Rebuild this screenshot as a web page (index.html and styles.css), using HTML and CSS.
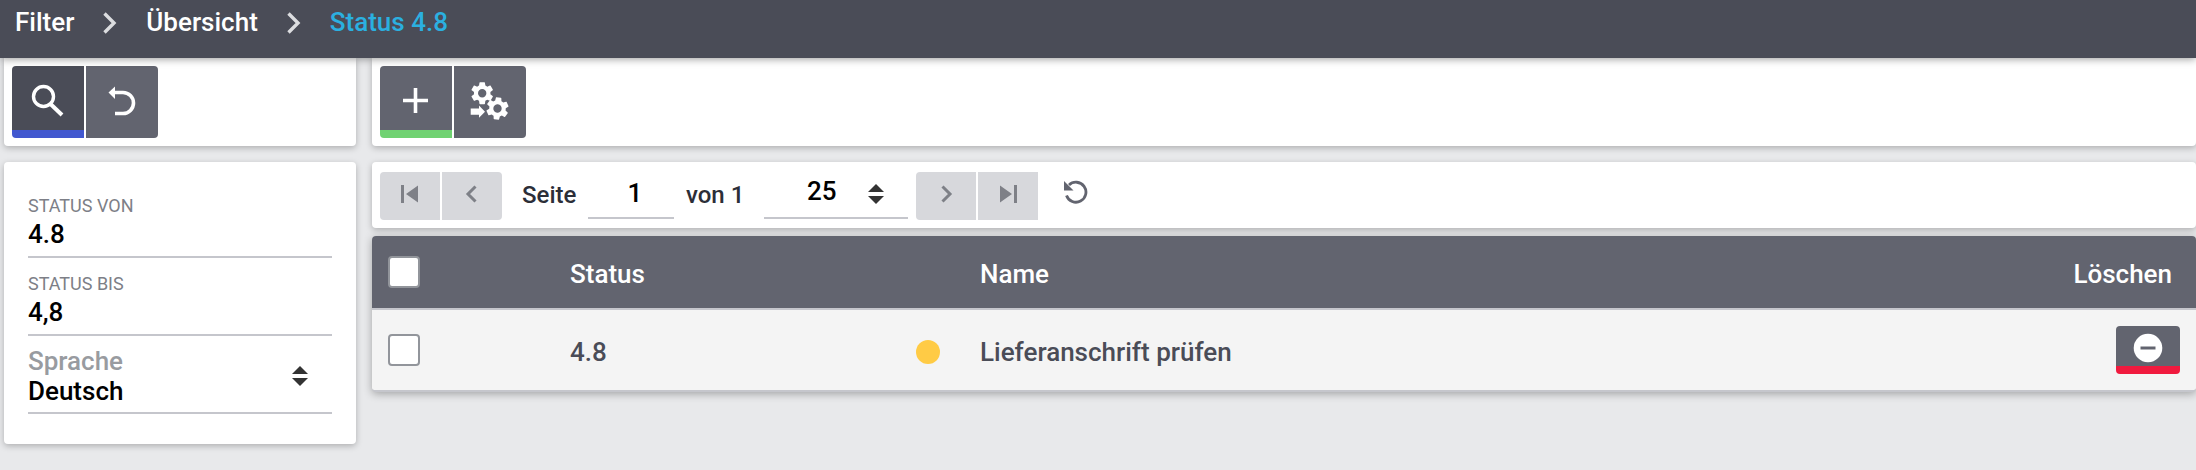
FILE: index.html
```html
<!DOCTYPE html>
<html lang="de">
<head>
<meta charset="utf-8">
<meta name="viewport" content="width=device-width, initial-scale=1">
<title>Status 4.8</title>
<link rel="stylesheet" href="styles.css">
</head>
<body>
<header class="topbar">
  <nav class="crumbs" aria-label="Navigation">
    <a class="crumb" href="#">Filter</a>
    <svg class="crumb-sep" viewBox="0 0 16 24" aria-hidden="true"><path d="M2.500 2.500 12 12l-9.500 9.500"/></svg>
    <a class="crumb" href="#">Übersicht</a>
    <svg class="crumb-sep" viewBox="0 0 16 24" aria-hidden="true"><path d="M2.500 2.500 12 12l-9.500 9.500"/></svg>
    <a class="crumb crumb-current" href="#" aria-current="page">Status 4.8</a>
  </nav>
</header>
<div class="layout">
  <aside class="sidebar">
    <div class="card toolbar">
      <button class="tool tool-active" type="button" aria-label="Suchen">
        <svg class="icon" viewBox="0 0 40 40" aria-hidden="true"><circle cx="15.500" cy="14.500" r="10" fill="none" stroke="#fff" stroke-width="3.400"/><path d="M22.500 22 34 33" fill="none" stroke="#fff" stroke-width="4"/></svg>
      </button>
      <button class="tool" type="button" aria-label="Zurücksetzen">
        <svg class="icon" viewBox="0 0 40 40" aria-hidden="true"><path d="M11 10.500h10a10.500 10.500 0 0 1 0 21H13" fill="none" stroke="#fff" stroke-width="3.600"/><path d="M6.500 10.500 13 4.500v12.500z" fill="#fff"/></svg>
      </button>
    </div>
    <form class="card filter">
      <div class="field">
        <label class="field-label" for="von">STATUS VON</label>
        <input class="field-input" id="von" type="text" value="4.8">
      </div>
      <div class="field">
        <label class="field-label" for="bis">STATUS BIS</label>
        <input class="field-input" id="bis" type="text" value="4,8">
      </div>
      <div class="field field-select">
        <label class="field-label field-label-large" for="sprache">Sprache</label>
        <select class="field-input" id="sprache"><option>Deutsch</option></select>
        <svg class="sort" viewBox="0 0 16 20" aria-hidden="true"><path d="M0 8 8 0l8 8zM0 12h16l-8 8z"/></svg>
      </div>
    </form>
  </aside>
  <main class="content">
    <div class="card toolbar">
      <button class="tool tool-add" type="button" aria-label="Hinzufügen">
        <svg class="icon" viewBox="0 0 40 40" aria-hidden="true"><path d="M19.500 6v25M7 18.500h25" fill="none" stroke="#fff" stroke-width="3.600"/></svg>
      </button>
      <button class="tool" type="button" aria-label="Verarbeiten">
        <svg class="icon" viewBox="0 0 40 40" aria-hidden="true">
          <defs><path id="gear" d="M19.430 12.980c.04-.32.07-.64.07-.98s-.03-.66-.07-.98l2.110-1.650c.19-.15.24-.42.12-.64l-2-3.460c-.12-.22-.39-.3-.61-.22l-2.490 1c-.52-.4-1.080-.73-1.690-.98l-.38-2.650C14.460 2.180 14.250 2 14 2h-4c-.25 0-.46.18-.49.42l-.38 2.650c-.61.25-1.170.59-1.690.98l-2.490-1c-.23-.09-.49 0-.61.22l-2 3.460c-.13.22-.07.49.12.64l2.110 1.650c-.04.32-.07.65-.07.98s.03.66.07.98l-2.110 1.650c-.19.15-.24.42-.12.64l2 3.460c.12.22.39.3.61.22l2.490-1c.52.4 1.080.73 1.690.98l.38 2.650c.03.24.24.42.49.42h4c.25 0 .46-.18.49-.42l.38-2.650c.61-.25 1.170-.59 1.690-.98l2.490 1c.23.09.49 0 .61-.22l2-3.460c.12-.22.07-.49-.12-.64l-2.110-1.650zM12 15.800a3.800 3.800 0 1 1 0-7.600 3.800 3.800 0 0 1 0 7.600z"/></defs>
          <g fill="#fff"><use href="#gear" transform="translate(-1 -2) scale(1.100)"/><use href="#gear" transform="translate(27.500 26.500) rotate(6) scale(1.100) translate(-12 -12)"/><path d="M.7 26.500H9v-3l6 6.200-6 6v-3H.7z"/></g>
        </svg>
      </button>
    </div>
    <div class="card pager">
      <div class="pager-group">
        <button class="page-btn" type="button" disabled aria-label="Erste Seite"><svg class="page-icon" viewBox="0 0 24 24" aria-hidden="true"><path d="M3 3h3v18H3zM20 3.500v17L8 12z"/></svg></button>
        <button class="page-btn" type="button" disabled aria-label="Vorherige Seite"><svg class="page-icon" viewBox="0 0 24 24" aria-hidden="true"><path class="chevron" d="M15.500 4.500 8 12l7.500 7.500"/></svg></button>
      </div>
      <label class="pager-text" for="seite">Seite</label>
      <input class="page-input" id="seite" type="text" value="1">
      <span class="pager-text pager-total">von 1</span>
      <div class="page-size">
        <select class="page-size-select" aria-label="Einträge pro Seite"><option>25</option></select>
        <svg class="sort" viewBox="0 0 16 20" aria-hidden="true"><path d="M0 8 8 0l8 8zM0 12h16l-8 8z"/></svg>
      </div>
      <div class="pager-group pager-group-next">
        <button class="page-btn" type="button" disabled aria-label="Nächste Seite"><svg class="page-icon" viewBox="0 0 24 24" aria-hidden="true"><path class="chevron" d="M8.500 4.500 16 12l-7.500 7.500"/></svg></button>
        <button class="page-btn" type="button" disabled aria-label="Letzte Seite"><svg class="page-icon" viewBox="0 0 24 24" aria-hidden="true"><path d="M18 3h3v18h-3zM4 3.500v17L16 12z"/></svg></button>
      </div>
      <button class="reload" type="button" aria-label="Neu laden"><svg class="reload-icon" viewBox="0 0 24 24" aria-hidden="true"><path d="M2.500 15.500A10 10 0 1 0 5 5" fill="none" stroke="#62646f" stroke-width="2.800"/><path d="M0 1v9.500h9.500z" fill="#62646f"/></svg></button>
    </div>
    <table class="grid">
      <thead>
        <tr>
          <th class="col-check"><input class="check" type="checkbox" aria-label="Alle auswählen"></th>
          <th class="col-status">Status</th>
          <th class="col-dot"></th>
          <th class="col-name">Name</th>
          <th class="col-delete">Löschen</th>
        </tr>
      </thead>
      <tbody>
        <tr>
          <td class="col-check"><input class="check" type="checkbox" aria-label="4.8 auswählen"></td>
          <td class="col-status">4.8</td>
          <td class="col-dot"><span class="dot"></span></td>
          <td class="col-name">Lieferanschrift prüfen</td>
          <td class="col-delete"><button class="delete" type="button" aria-label="Löschen"><svg class="delete-icon" viewBox="0 0 30 30" aria-hidden="true"><circle cx="15" cy="15" r="14.300" fill="#fff"/><path d="M7.500 15h15" stroke="#62646f" stroke-width="3"/></svg></button></td>
        </tr>
      </tbody>
    </table>
  </main>
</div>
</body>
</html>
```
FILE: styles.css
```css
* { box-sizing: border-box; }

body {
  margin: 0;
  min-height: 100vh;
  background: #e8e9eb;
  color: #4a4c57;
  font: 500 26px/30px Roboto, "Liberation Sans", sans-serif;
}

button, input, select {
  margin: 0;
  padding: 0;
  border: 0;
  border-radius: 0;
  background: none;
  color: #000;
  font: inherit;
}

svg { display: block; }

.topbar {
  position: relative;
  z-index: 1;
  height: 58px;
  padding: 7px 15px;
  background: #4a4c57;
  box-shadow: 0 1px 8px rgba(0, 0, 0, 0.4);
}
.crumbs { display: flex; align-items: center; }
.crumb { color: #fff; text-decoration: none; }
.crumb-current { color: #2bb0e0; }
.crumb-sep {
  width: 16px;
  height: 24px;
  margin: 1px 28px 0;
  fill: none;
  stroke: #dcdde0;
  stroke-width: 3.400;
}

.layout { display: flex; gap: 16px; padding-left: 4px; }
.sidebar { flex: none; width: 352px; }
.content { flex: 1; min-width: 0; }

.card {
  background: #fff;
  border-radius: 4px;
  box-shadow: 0 2px 6px rgba(0, 0, 0, 0.25);
}

.toolbar { display: flex; gap: 2px; margin-bottom: 16px; padding: 8px; border-radius: 0 0 4px 4px; }
.tool {
  display: grid;
  place-items: center;
  width: 72px;
  height: 72px;
  padding-top: 8px;
  border-bottom: 8px solid transparent;
  background: #62646f;
}
.tool:first-child { border-radius: 4px 0 0 4px; }
.tool:last-child { border-radius: 0 4px 4px 0; }
.tool-active { background: #4a4c57; border-bottom-color: #4258cf; }
.tool-add { border-bottom-color: #70d272; }
.icon { width: 40px; height: 40px; }

.filter { padding: 30px 24px; }
.field { display: flex; flex-direction: column; height: 78px; border-bottom: 2px solid #c5c6cc; }
.field:first-child { height: 66px; }
.field-label { padding-top: 14px; color: #7d7f87; font-size: 18px; font-weight: 400; line-height: 24px; }
.field:first-child .field-label { padding-top: 2px; }
.field-input { width: 100%; height: 32px; appearance: none; }
.field-label-large { padding-top: 11px; color: #989ba0; font-size: 26px; font-weight: 500; line-height: 28px; }
.field-select { position: relative; }
.sort { position: absolute; width: 16px; height: 20px; fill: #333; pointer-events: none; }
.field-select .sort { right: 24px; top: 30px; }

.pager { display: flex; align-items: center; height: 66px; margin-bottom: 8px; padding: 2px 8px 0; color: #2c2e38; font-size: 24px; }
.pager-group { display: flex; gap: 2px; }
.page-btn { display: grid; place-items: center; width: 60px; height: 48px; padding-bottom: 4px; background: #d7d8dc; }
.page-btn:first-child { border-radius: 4px 0 0 4px; }
.page-btn:last-child { border-radius: 0 4px 4px 0; }
.pager-group-next .page-btn:last-child { border-radius: 0; }
.page-icon { width: 24px; height: 24px; fill: #7e8087; }
.chevron { fill: none; stroke: #7e8087; stroke-width: 3; }
.pager-text { width: 66px; margin-left: 20px; padding-bottom: 2px; }
.page-input { width: 86px; height: 46px; padding: 0 0 4px 8px; border-bottom: 2px solid #c5c6cc; font-size: 26px; text-align: center; }
.pager-total { width: 78px; margin-left: 12px; }
.page-size { position: relative; width: 144px; }
.page-size-select { width: 100%; height: 46px; padding: 0 0 8px 43px; border-bottom: 2px solid #c5c6cc; appearance: none; font-size: 26px; }
.page-size .sort { right: 24px; top: 11px; }
.pager-group-next { margin-left: 8px; }
.reload { margin: 0 0 8px 26px; }
.reload-icon { width: 24px; height: 24px; }

.grid {
  width: 100%;
  border-collapse: separate;
  border-spacing: 0;
  table-layout: fixed;
  background: #f4f4f4;
  border-bottom: 2px solid #c5c6cc;
  border-radius: 4px;
  box-shadow: 0 2px 8px rgba(0, 0, 0, 0.3);
}
.grid th, .grid td { padding: 0; font-weight: 500; text-align: left; vertical-align: middle; }
.grid th { height: 74px; background: #62646f; border-bottom: 2px solid #c5c6cc; color: #fff; }
.grid td { height: 80px; }
.grid th:first-child { border-top-left-radius: 4px; }
.grid th:last-child { border-top-right-radius: 4px; }
.grid .col-check { width: 198px; padding-left: 16px; }
.grid .col-status { width: 346px; padding-top: 3px; }
.grid .col-name { padding-top: 3px; }
.col-dot { width: 64px; }
.col-delete { width: 200px; }
.grid th.col-delete { padding-top: 3px; padding-right: 24px; text-align: right; }
.grid td.col-delete { padding-right: 16px; }
.check { display: block; width: 32px; height: 32px; appearance: none; background: #fff; border: 2px solid #92959b; border-radius: 4px; }
.check:checked { background: #4258cf; }
.dot { display: block; width: 24px; height: 24px; margin-top: 4px; border-radius: 50%; background: #ffcb45; }
.delete { display: grid; place-items: center; width: 64px; height: 48px; margin-left: auto; padding-top: 4px; border-bottom: 8px solid #f01a3e; border-radius: 4px; background: #62646f; }
.delete-icon { width: 30px; height: 30px; }
```
